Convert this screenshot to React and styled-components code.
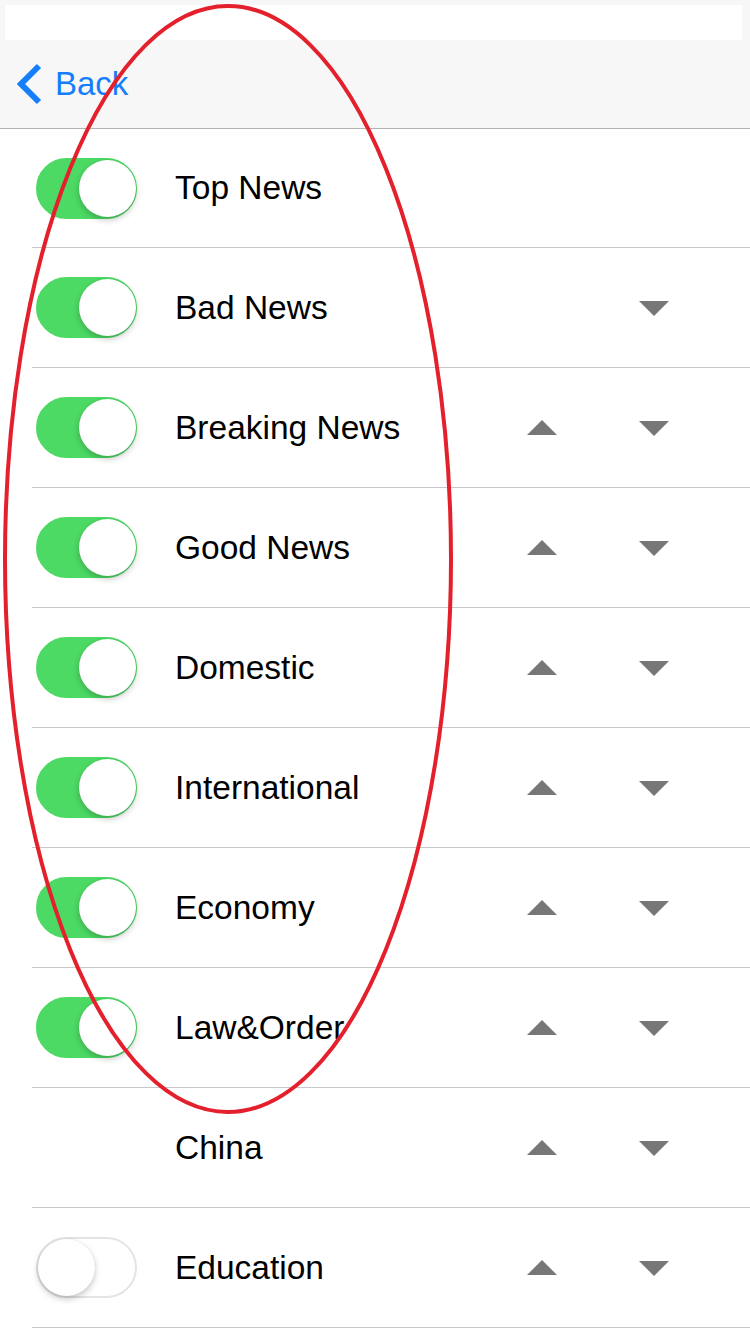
import React from "react";
import styled, { createGlobalStyle } from "styled-components";

const Global = createGlobalStyle`
  html, body { margin: 0; padding: 0; background: #ffffff; }
  body { font-family: "Liberation Sans", Arial, sans-serif; }
`;

const Page = styled.div`
  position: relative;
  width: 750px;
  min-height: 1334px;
  background: #ffffff;
  overflow: hidden;
`;

const Header = styled.header`
  box-sizing: border-box;
  background: #f7f7f7;
  border-bottom: 1px solid #b2b2b2;
  display: flex;
  flex-direction: column;
  height: 129px;
`;

const StatusBar = styled.div`
  margin: 5px 8px 0 5px;
  height: 35px;
  background: #ffffff;
`;

const NavBar = styled.nav`
  flex: 1;
  display: flex;
  align-items: center;
  padding-left: 15px;
`;

const BackButton = styled.button`
  display: flex;
  align-items: center;
  gap: 12px;
  border: none;
  background: none;
  padding: 0;
  color: #157efb;
  font-family: "Liberation Sans", Arial, sans-serif;
  font-size: 33px;
  cursor: pointer;
`;

const List = styled.ul`
  list-style: none;
  margin: 0 0 0 32px;
  padding: 0;
`;

const Row = styled.li`
  height: ${(p) => (p.$first ? 118 : 119)}px;
  border-bottom: 1px solid #c8c7cc;
  display: flex;
  align-items: center;
  padding-left: 4px;
`;

const SwitchSlot = styled.div`
  width: 101px;
  height: 61px;
  margin-right: 38px;
  flex-shrink: 0;
`;

const Track = styled.div`
  position: relative;
  box-sizing: border-box;
  width: 101px;
  height: 61px;
  border-radius: 31px;
  background: ${(p) => (p.$on ? "#4cd964" : "#ffffff")};
  border: 2px solid ${(p) => (p.$on ? "#4cd964" : "#e4e4e4")};
`;

const Knob = styled.div`
  position: absolute;
  top: 0;
  left: ${(p) => (p.$on ? "41px" : "0px")};
  width: 57px;
  height: 57px;
  border-radius: 50%;
  background: #ffffff;
  box-shadow: 0 3px 6px rgba(0, 0, 0, 0.22), 0 0 1px rgba(0, 0, 0, 0.15);
`;

const Label = styled.span`
  flex: 1;
  font-size: 33.5px;
  color: #000000;
`;

const ArrowSlot = styled.div`
  width: 60px;
  height: 30px;
  display: flex;
  align-items: center;
  justify-content: center;
  margin-left: ${(p) => p.$gap}px;
`;

const Tail = styled.div`
  width: 66px;
  flex-shrink: 0;
`;

const Overlay = styled.svg`
  position: absolute;
  top: 0;
  left: 0;
  pointer-events: none;
`;

const Chevron = () => (
  <svg width="28" height="44" viewBox="0 0 28 44">
    <polyline
      points="24,4 6,22 24,40"
      fill="none"
      stroke="#157efb"
      strokeWidth="6"
      strokeLinecap="butt"
      strokeLinejoin="miter"
    />
  </svg>
);

const Tri = ({ dir }) => (
  <svg width="30" height="16" viewBox="0 0 30 16">
    {dir === "up" ? (
      <polygon points="0,15 30,15 15,0" fill="#777777" />
    ) : (
      <polygon points="0,1 30,1 15,16" fill="#777777" />
    )}
  </svg>
);

const Switch = ({ on }) => (
  <SwitchSlot>
    {on !== null && (
      <Track $on={on}>
        <Knob $on={on} />
      </Track>
    )}
  </SwitchSlot>
);

const items = [
  { name: "Top News", on: true, up: false, down: false },
  { name: "Bad News", on: true, up: false, down: true },
  { name: "Breaking News", on: true, up: true, down: true },
  { name: "Good News", on: true, up: true, down: true },
  { name: "Domestic", on: true, up: true, down: true },
  { name: "International", on: true, up: true, down: true },
  { name: "Economy", on: true, up: true, down: true },
  { name: "Law&Order", on: true, up: true, down: true },
  { name: "China", on: null, up: true, down: true },
  { name: "Education", on: false, up: true, down: true },
];

export default function App() {
  return (
    <Page>
      <Global />
      <Header>
        <StatusBar />
        <NavBar>
          <BackButton>
            <Chevron />
            Back
          </BackButton>
        </NavBar>
      </Header>
      <List>
        {items.map((it, i) => (
          <Row key={it.name} $first={i === 0}>
            <Switch on={it.on} />
            <Label>{it.name}</Label>
            <ArrowSlot $gap={0}>{it.up && <Tri dir="up" />}</ArrowSlot>
            <ArrowSlot $gap={52}>{it.down && <Tri dir="down" />}</ArrowSlot>
            <Tail />
          </Row>
        ))}
      </List>
      <Overlay width="750" height="1334" viewBox="0 0 750 1334">
        <ellipse
          cx="228"
          cy="559"
          rx="223"
          ry="553"
          fill="none"
          stroke="#e3202b"
          strokeWidth="4"
        />
      </Overlay>
    </Page>
  );
}
